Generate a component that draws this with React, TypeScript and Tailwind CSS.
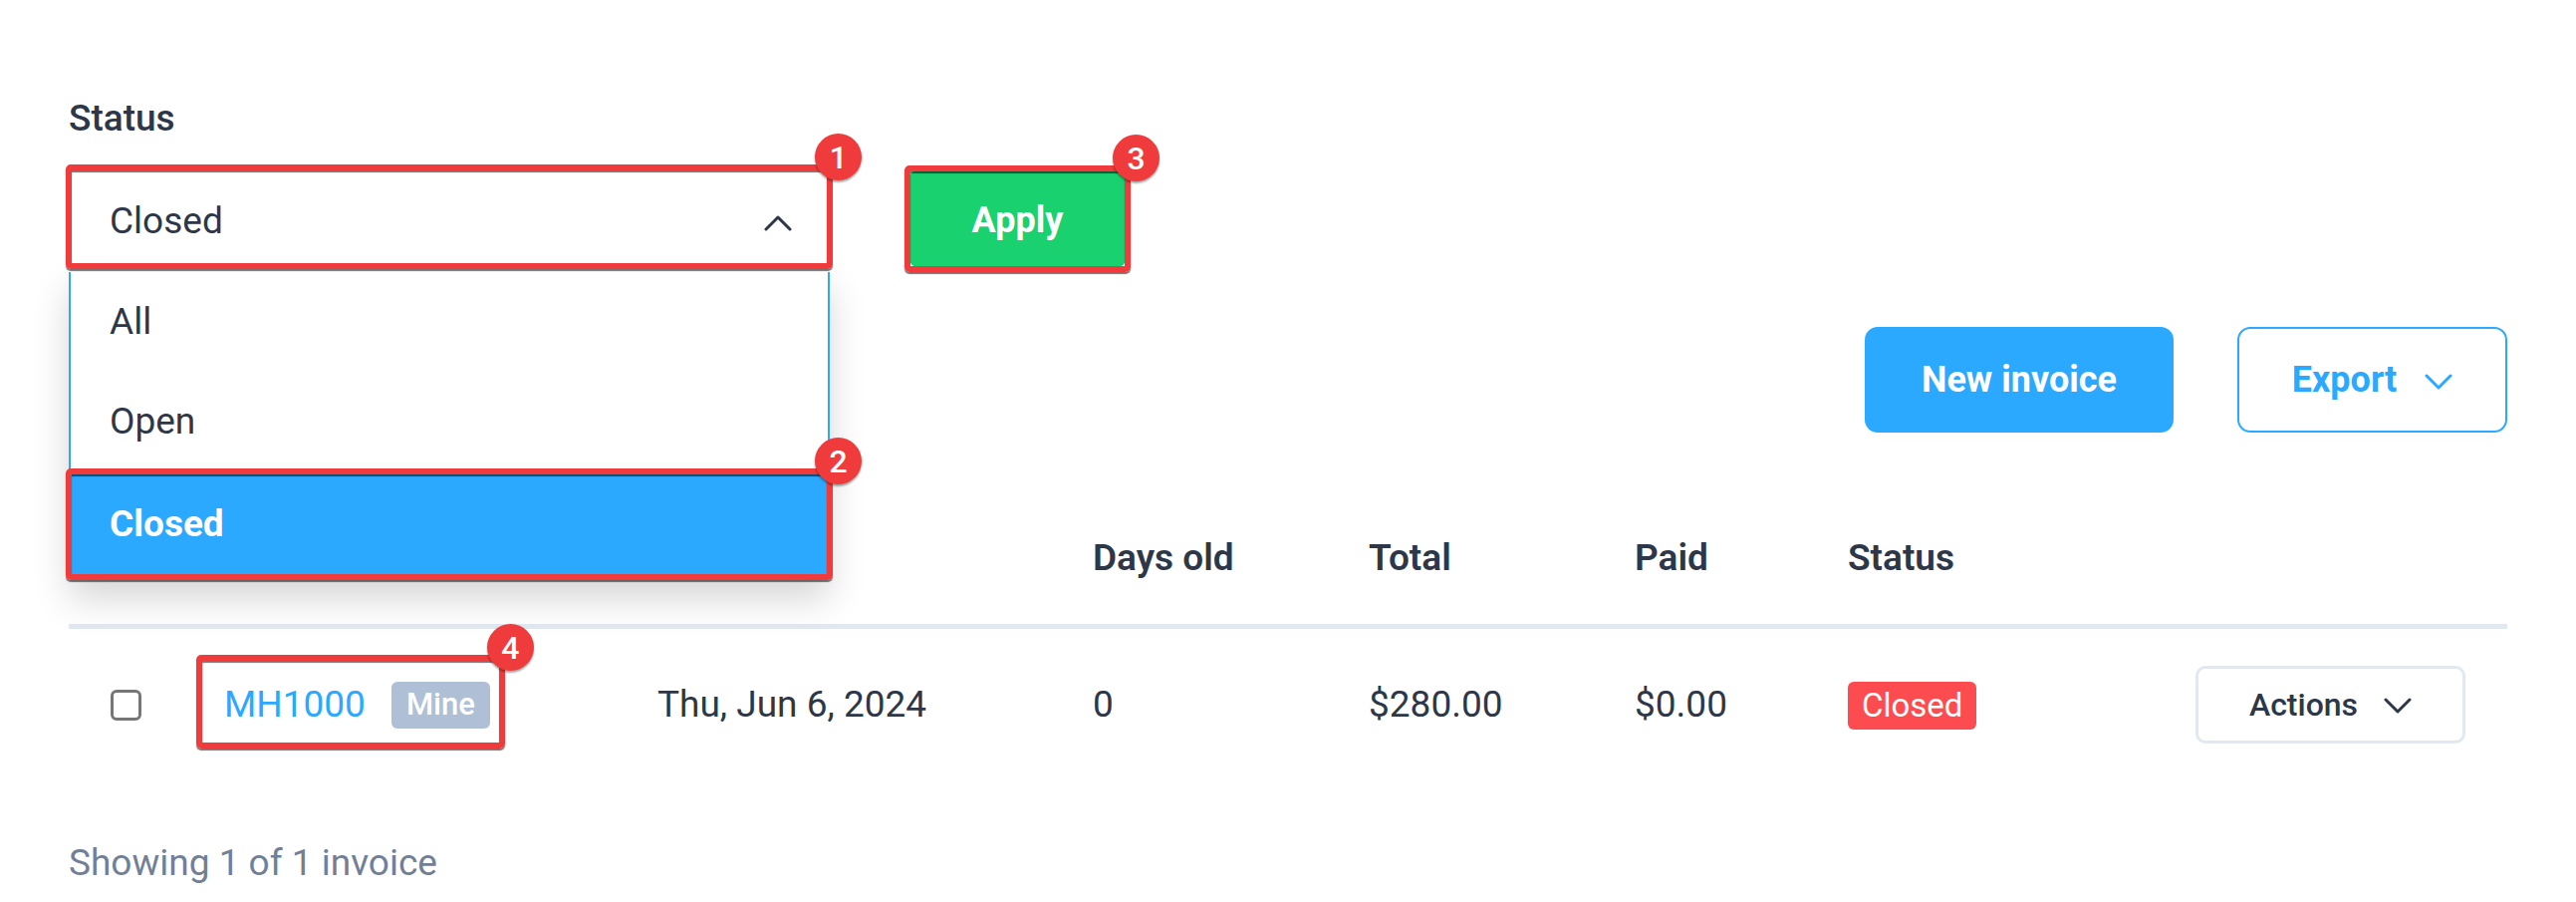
import React from "react";

type CalloutProps = { n: number; className: string };

// red numbered frame drawn over a control
const Callout = ({ n, className }: CalloutProps) => (
  <span
    className={
      "pointer-events-none absolute z-20 rounded-[5px] border-[6px] border-[#ef3b3b] shadow-[0_2px_1px_rgba(0,0,0,0.55),inset_0_2px_1px_rgba(0,0,0,0.55)] " +
      className
    }
  >
    <span className="absolute -right-[35px] -top-[37px] flex h-[47px] w-[47px] items-center justify-center rounded-full bg-[#ef3b3b] text-[32px] font-medium leading-none text-white shadow-[0_2px_2px_rgba(0,0,0,0.35)]">
      {n}
    </span>
  </span>
);

const Chevron = ({ up = false, className = "" }: { up?: boolean; className?: string }) => (
  <svg width="28" height="16" viewBox="0 0 28 16" fill="none" className={className}>
    <path
      d={up ? "M2 14 L14 2 L26 14" : "M2 2 L14 14 L26 2"}
      stroke="currentColor"
      strokeWidth="3"
      strokeLinecap="round"
      strokeLinejoin="round"
    />
  </svg>
);

const options = [
  { label: "All", h: "h-[100px]" },
  { label: "Open", h: "h-[100px]" },
];

const App = () => {
  return (
    <div className="min-h-screen bg-white px-[69px] pt-[90px] font-['Roboto',sans-serif] text-[37px] text-[#2d3748]">
      <label className="block text-[37px] font-medium leading-[58px]">Status</label>

      <div className="mt-[20px] flex items-start">
        <div className="relative w-[764px]">
          <div className="flex h-[99px] items-center justify-between rounded-[4px] border-2 border-[#2ba8ff] pl-[39px] pr-[36px]">
            <span className="pt-[9px]">Closed</span>
            <Chevron up className="mt-[12px] text-[#2d3748]" />
          </div>
          <Callout n={1} className="-inset-[3px]" />

          <ul className="absolute left-0 right-0 top-full z-10 bg-white pt-[6px] shadow-[0_22px_34px_rgba(0,0,0,0.16)]">
            {options.map((o) => (
              <li key={o.label} className={"flex items-center border-x-2 border-[#2ba8ff] pl-[39px] " + o.h}>
                {o.label}
              </li>
            ))}
            <li className="relative flex h-[106px] items-center bg-[#2ba8ff] pl-[41px] font-bold text-white">
              Closed
              <Callout n={2} className="-inset-[3px]" />
            </li>
          </ul>
        </div>

        <div className="relative ml-[80px] mt-[3px]">
          <button className="h-[97px] w-[217px] rounded-[8px] bg-[#19d16f] pt-[3px] text-[36px] font-bold text-white">Apply</button>
          <Callout n={3} className="-inset-[5px]" />
        </div>
      </div>

      <div className="mt-[60px] flex justify-end gap-[64px]">
        <button className="h-[106px] w-[310px] rounded-[13px] bg-[#2ba8ff] text-[36px] font-bold text-white">New invoice</button>
        <button className="flex h-[106px] w-[271px] items-center justify-center gap-[28px] rounded-[13px] border-2 border-[#2ba8ff] text-[36px] font-bold text-[#2ba8ff]">
          Export
          <Chevron className="mt-[4px]" />
        </button>
      </div>

      <div className="mt-[58px]">
        <div className="grid h-[139px] grid-cols-[156px_435px_437px_277px_267px_214px_1fr_auto] items-center border-b-[5px] border-[#e2e8f0] pt-[2px] font-semibold">
          <div />
          <div>Invoice</div>
          <div>Date</div>
          <div>Days old</div>
          <div>Total</div>
          <div>Paid</div>
          <div>Status</div>
          <div className="w-[313px]" />
        </div>

        <div className="grid h-[152px] grid-cols-[156px_435px_437px_277px_267px_214px_1fr_auto] items-center">
          <div className="pl-[42px]">
            <span className="block h-[31px] w-[31px] rounded-[6px] border-[3px] border-[#767676]" />
          </div>
          <div>
            <div className="relative inline-flex items-center">
              <a className="text-[#2ba8ff]">MH1000</a>
              <span className="ml-[26px] flex h-[47px] items-center rounded-[6px] bg-[#aebfd6] px-[15px] text-[31px] font-medium text-white">
                Mine
              </span>
              <Callout n={4} className="-bottom-[16px] -left-[28px] -right-[15px] -top-[22px]" />
            </div>
          </div>
          <div>Thu, Jun 6, 2024</div>
          <div>0</div>
          <div>$280.00</div>
          <div>$0.00</div>
          <div>
            <span className="inline-flex h-[48px] items-center rounded-[6px] bg-[#fd4c4f] px-[14px] text-[33px] text-white">
              Closed
            </span>
          </div>
          <div className="pr-[42px]">
            <button className="flex h-[78px] w-[271px] items-center justify-center gap-[26px] rounded-[10px] border-[3px] border-[#e2e8f0] text-[32px] font-medium">
              Actions
              <Chevron className="mt-[2px]" />
            </button>
          </div>
        </div>
      </div>

      <p className="mt-[59px] leading-[48px] text-[#718096]">Showing 1 of 1 invoice</p>
    </div>
  );
};

export default App;
